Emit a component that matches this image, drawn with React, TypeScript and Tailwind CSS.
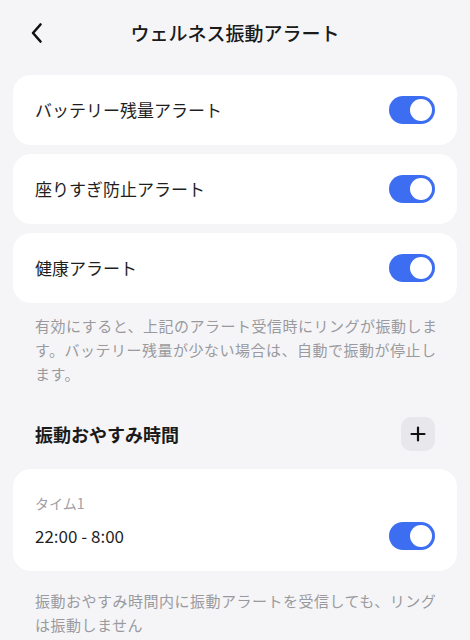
import React from 'react';

const Toggle = () => (
  <div className="w-[46px] h-[28px] rounded-full bg-[#3d6ef2] flex items-center justify-end pr-[3px] shrink-0">
    <div className="w-[22px] h-[22px] rounded-full bg-white" />
  </div>
);

const SwitchCard = ({ label }: { label: string }) => (
  <div className="bg-white rounded-[18px] h-[70px] px-[22px] flex items-center justify-between">
    <span className="text-[17px] text-[#1f1f1f]">{label}</span>
    <Toggle />
  </div>
);

export default function App() {
  return (
    <div
      className="min-h-screen bg-[#f5f5f7] px-[13px] pb-6"
      style={{ fontFamily: '"Noto Sans CJK JP", "Noto Sans", sans-serif' }}
    >
      {/* Header */}
      <div className="relative h-[66px] flex items-center justify-center">
        <button className="absolute left-[17px] top-[22px] text-[#111]">
          <svg width="14" height="22" viewBox="0 0 14 22" fill="none">
            <path d="M10.5 2.5 L3 11 L10.5 19.5" stroke="currentColor" strokeWidth="2.6" strokeLinecap="round" strokeLinejoin="round" />
          </svg>
        </button>
        <h1 className="text-[19px] font-medium text-[#1a1a1a]">ウェルネス振動アラート</h1>
      </div>

      {/* Alert toggles */}
      <div className="mt-[9px] flex flex-col gap-[9px]">
        <SwitchCard label="バッテリー残量アラート" />
        <SwitchCard label="座りすぎ防止アラート" />
        <SwitchCard label="健康アラート" />
      </div>

      <p className="mt-[11px] px-[22px] text-[15px] tracking-[0.5px] leading-[24px] text-[#9a9a9e] whitespace-nowrap">
        有効にすると、上記のアラート受信時にリングが振動しま<br />
        す。バッテリー残量が少ない場合は、自動で振動が停止し<br />
        ます。
      </p>

      {/* Quiet time section */}
      <div className="mt-[31px] px-[22px] flex items-center justify-between">
        <h2 className="text-[18px] font-semibold text-[#1a1a1a]">振動おやすみ時間</h2>
        <button className="w-[34px] h-[34px] rounded-[10px] bg-[#e8e8ec] flex items-center justify-center text-[#111]">
          <svg width="16" height="16" viewBox="0 0 16 16" fill="none">
            <path d="M8 1.5 V14.5 M1.5 8 H14.5" stroke="currentColor" strokeWidth="2.2" strokeLinecap="round" />
          </svg>
        </button>
      </div>

      <div className="mt-[18px] bg-white rounded-[18px] h-[102px] px-[22px] pt-[24px]">
        <div className="text-[14px] leading-[20px] text-[#a0a0a4]">タイム1</div>
        <div className="mt-[9px] flex items-center justify-between">
          <span className="text-[17px] text-[#1f1f1f]">22:00 - 8:00</span>
          <Toggle />
        </div>
      </div>

      <p className="mt-[18px] px-[22px] text-[15px] tracking-[0.5px] leading-[24px] text-[#9a9a9e] whitespace-nowrap">
        振動おやすみ時間内に振動アラートを受信しても、リング<br />
        は振動しません
      </p>
    </div>
  );
}
